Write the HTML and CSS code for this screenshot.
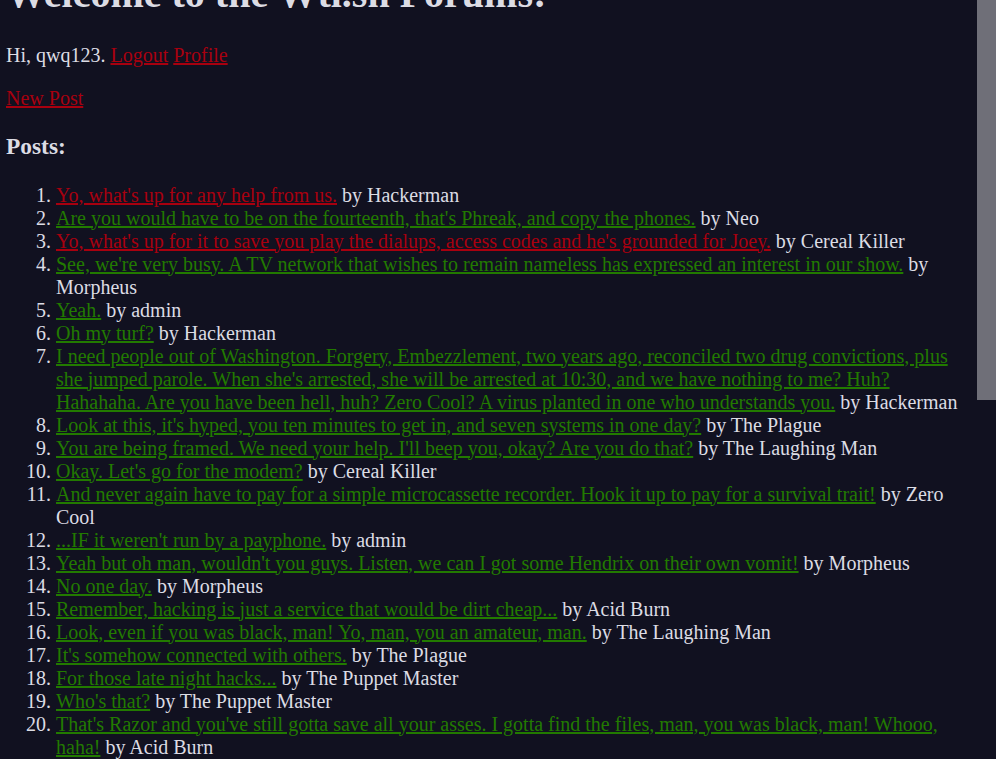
FILE: index.html
```html
<!DOCTYPE html>
<html>
<head>
<meta charset="utf-8">
<title>Wtl.sh Forums</title>
<link rel="stylesheet" href="styles.css">
</head>
<body>
<div class="page">
  <h1 class="title">Welcome to the Wtl.sh Forums!</h1>
  <p>Hi, qwq123. <a class="red" href="#">Logout</a> <a class="red" href="#">Profile</a></p>
  <p><a class="red" href="#">New Post</a></p>
  <h3 class="posts-title">Posts:</h3>
  <ol class="posts">
    <li><a class="red" href="#">Yo, what's up for any help from us.</a> by Hackerman</li>
    <li><a class="green" href="#">Are you would have to be on the fourteenth, that's Phreak, and copy the phones.</a> by Neo</li>
    <li><a class="red" href="#">Yo, what's up for it to save you play the dialups, access codes and he's grounded for Joey.</a> by Cereal Killer</li>
    <li><a class="green" href="#">See, we're very busy. A TV network that wishes to remain nameless has expressed an interest in our show.</a> by Morpheus</li>
    <li><a class="green" href="#">Yeah.</a> by admin</li>
    <li><a class="green" href="#">Oh my turf?</a> by Hackerman</li>
    <li><a class="green" href="#">I need people out of Washington. Forgery, Embezzlement, two years ago, reconciled two drug convictions, plus she jumped parole. When she's arrested, she will be arrested at 10:30, and we have nothing to me? Huh? Hahahaha. Are you have been hell, huh? Zero Cool? A virus planted in one who understands you.</a> by Hackerman</li>
    <li><a class="green" href="#">Look at this, it's hyped, you ten minutes to get in, and seven systems in one day?</a> by The Plague</li>
    <li><a class="green" href="#">You are being framed. We need your help. I'll beep you, okay? Are you do that?</a> by The Laughing Man</li>
    <li><a class="green" href="#">Okay. Let's go for the modem?</a> by Cereal Killer</li>
    <li><a class="green" href="#">And never again have to pay for a simple microcassette recorder. Hook it up to pay for a survival trait!</a> by Zero Cool</li>
    <li><a class="green" href="#">...IF it weren't run by a payphone.</a> by admin</li>
    <li><a class="green" href="#">Yeah but oh man, wouldn't you guys. Listen, we can I got some Hendrix on their own vomit!</a> by Morpheus</li>
    <li><a class="green" href="#">No one day.</a> by Morpheus</li>
    <li><a class="green" href="#">Remember, hacking is just a service that would be dirt cheap...</a> by Acid Burn</li>
    <li><a class="green" href="#">Look, even if you was black, man! Yo, man, you an amateur, man.</a> by The Laughing Man</li>
    <li><a class="green" href="#">It's somehow connected with others.</a> by The Plague</li>
    <li><a class="green" href="#">For those late night hacks...</a> by The Puppet Master</li>
    <li><a class="green" href="#">Who's that?</a> by The Puppet Master</li>
    <li><a class="green" href="#">That's Razor and you've still gotta save all your asses. I gotta find the files, man, you was black, man! Whooo, haha!</a> by Acid Burn</li>
  </ol>
</div>
<div class="scrollbar"><div class="thumb"></div></div>
</body>
</html>
```

FILE: styles.css
```css
html {
  background: #111120;
  overflow: hidden;
  height: 100%;
}
body {
  margin: 0;
  color: #dcdce4;
  font-family: "Liberation Serif", "Times New Roman", serif;
  font-size: 20px;
}
.page {
  margin: -56.8px 29px 0 6px;
}
.title {
  font-size: 40px;
  margin: 26.8px 0;
}
p {
  margin: 20px 0;
}
.posts-title {
  font-size: 23.4px;
  margin: 23.4px 0;
}
.posts {
  margin: 20px 0;
  padding-left: 50px;
}
.posts li {
  line-height: 23px;
}
a.red {
  color: #a8000f;
}
a.green {
  color: #227a00;
}
.scrollbar {
  position: fixed;
  top: 0;
  right: 0;
  width: 19px;
  height: 100%;
  background: #111120;
}
.thumb {
  width: 19px;
  height: 400px;
  background: #6f6f78;
}
```
